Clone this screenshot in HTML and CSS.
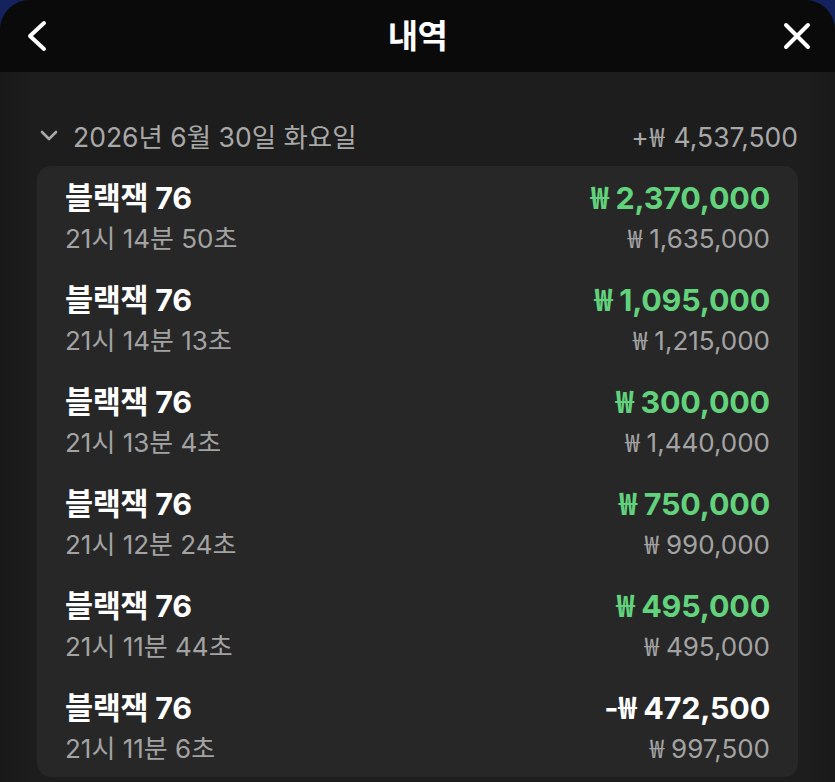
FILE: index.html
```html
<!DOCTYPE html>
<html lang="ko">
<head>
<meta charset="utf-8">
<title>내역</title>
<link rel="stylesheet" href="styles.css">
</head>
<body>
<div class="sheet">
  <header class="topbar">
    <button class="icon-btn" aria-label="뒤로">
      <svg width="26" height="34" viewBox="0 0 26 34"><path d="M19 4 L5 17 L19 30" fill="none" stroke="#fff" stroke-width="4" stroke-linecap="round" stroke-linejoin="round"/></svg>
    </button>
    <h1 class="title">내역</h1>
    <button class="icon-btn" aria-label="닫기">
      <svg width="32" height="32" viewBox="0 0 32 32"><path d="M5 5 L27 27 M27 5 L5 27" fill="none" stroke="#fff" stroke-width="4" stroke-linecap="round"/></svg>
    </button>
  </header>
  <main class="content">
    <div class="day-head">
      <div class="day-left">
        <svg class="chev" width="20" height="14" viewBox="0 0 20 14"><path d="M3 4 L10 11 L17 4" fill="none" stroke="#a8a8a8" stroke-width="2.6" stroke-linecap="round" stroke-linejoin="round"/></svg>
        <span>2026년 6월 30일 화요일</span>
      </div>
      <span class="day-total">+<span class="won">₩</span>4,537,500</span>
    </div>
    <section class="card">
      <div class="row">
        <div class="row-line"><span class="game">블랙잭 76</span><span class="amt win"><span class="won">₩</span>2,370,000</span></div>
        <div class="row-line"><span class="sub">21시 14분 50초</span><span class="sub"><span class="won">₩</span>1,635,000</span></div>
      </div>
      <div class="row">
        <div class="row-line"><span class="game">블랙잭 76</span><span class="amt win"><span class="won">₩</span>1,095,000</span></div>
        <div class="row-line"><span class="sub">21시 14분 13초</span><span class="sub"><span class="won">₩</span>1,215,000</span></div>
      </div>
      <div class="row">
        <div class="row-line"><span class="game">블랙잭 76</span><span class="amt win"><span class="won">₩</span>300,000</span></div>
        <div class="row-line"><span class="sub">21시 13분 4초</span><span class="sub"><span class="won">₩</span>1,440,000</span></div>
      </div>
      <div class="row">
        <div class="row-line"><span class="game">블랙잭 76</span><span class="amt win"><span class="won">₩</span>750,000</span></div>
        <div class="row-line"><span class="sub">21시 12분 24초</span><span class="sub"><span class="won">₩</span>990,000</span></div>
      </div>
      <div class="row">
        <div class="row-line"><span class="game">블랙잭 76</span><span class="amt win"><span class="won">₩</span>495,000</span></div>
        <div class="row-line"><span class="sub">21시 11분 44초</span><span class="sub"><span class="won">₩</span>495,000</span></div>
      </div>
      <div class="row">
        <div class="row-line"><span class="game">블랙잭 76</span><span class="amt loss">-<span class="won">₩</span>472,500</span></div>
        <div class="row-line"><span class="sub">21시 11분 6초</span><span class="sub"><span class="won">₩</span>997,500</span></div>
      </div>
    </section>
  </main>
</div>
</body>
</html>
```

FILE: styles.css
```css
* { box-sizing: border-box; }
html, body { margin: 0; padding: 0; }
body {
  background: linear-gradient(180deg, #14225e 0%, #0b1440 100%);
  font-family: "Inter", "Noto Sans CJK KR", sans-serif;
  color: #fff;
  height: 782px;
  overflow: hidden;
}
.sheet {
  display: flex;
  flex-direction: column;
  height: 782px;
  border-radius: 30px 30px 0 0;
  overflow: hidden;
  background: #1c1c1c;
}
.topbar {
  height: 72px;
  background: #0a0a0a;
  display: flex;
  align-items: center;
  justify-content: space-between;
  padding: 0 22px 0 22px;
  flex: none;
}
.icon-btn {
  background: none;
  border: 0;
  padding: 0;
  width: 32px;
  height: 34px;
  display: flex;
  align-items: center;
  justify-content: center;
}
.title {
  margin: 0;
  font-size: 33px;
  font-weight: 700;
  letter-spacing: -0.5px;
  line-height: 40px;
}
.content {
  flex: 1;
  padding: 43px 37px 0 37px;
  background: linear-gradient(90deg, #191919 0, #1d1d1d 30px, #1d1d1d 805px, #191919 835px);
}
.day-head {
  height: 40px;
  display: flex;
  align-items: center;
  justify-content: space-between;
  color: #a8a8a8;
  font-size: 26.5px;
  margin-bottom: 11px;
}
.day-left {
  display: flex;
  align-items: center;
  gap: 14px;
  padding-left: 2px;
}
.chev { flex: none; }
.won {
  display: inline-block;
  font-family: "Noto Sans CJK KR", sans-serif;
  margin-right: 7px;
  font-size: 1em;
}
.day-total .won { margin-left: 1px; margin-right: 9px; }
.card {
  background: #272727;
  border-radius: 14px;
  padding: 10px 28px 11px 28px;
  display: flex;
  flex-direction: column;
  gap: 22px;
}
.row-line {
  height: 40px;
  display: flex;
  align-items: center;
  justify-content: space-between;
}
.game {
  font-size: 30.5px;
  font-weight: 700;
  letter-spacing: -0.3px;
}
.amt {
  font-size: 30.5px;
  font-weight: 700;
  letter-spacing: -0.2px;
}
.win { color: #62d27c; }
.loss { color: #ffffff; }
.sub {
  font-size: 26px;
  color: #a3a3a3;
}
```
